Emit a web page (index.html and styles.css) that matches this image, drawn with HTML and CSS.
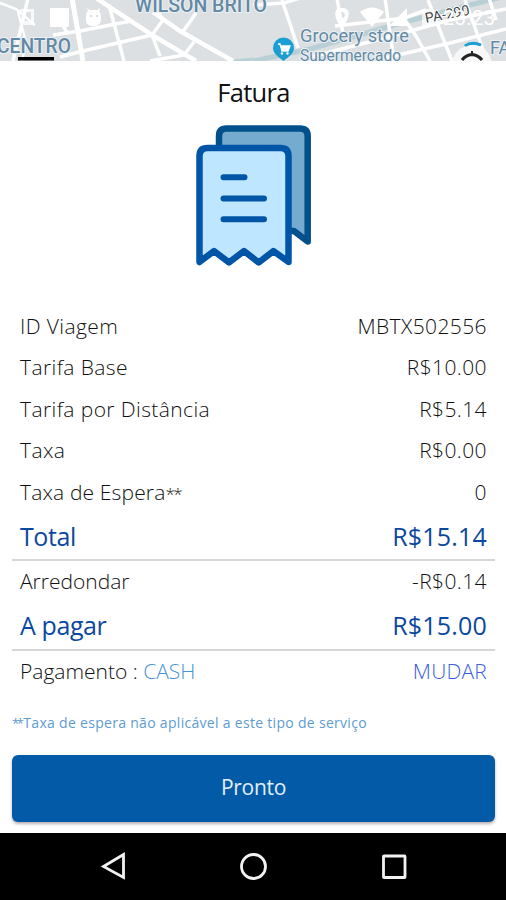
FILE: index.html
```html
<!DOCTYPE html>
<html lang="pt">

<head>
    <meta charset="utf-8">
    <title>Fatura</title>
    <link rel="stylesheet" href="styles.css">
</head>

<body>
    <div class="screen">

        <div class="map">
            <svg xmlns="http://www.w3.org/2000/svg" viewBox="0 0 506 61">
                <rect width="506" height="61" fill="#dce0e2" />

                <!-- main road -->
                <g fill="none" stroke="#b9cfd6" stroke-width="5">
                    <path d="M253 61 L310 49 L405 22 L470 5 L506 -4" />
                    <path d="M234 61 L253 59" stroke-width="3" />
                </g>

                <!-- streets -->
                <g fill="none" stroke="#ffffff" stroke-width="3.5">
                    <path d="M0 3 L16 9 L35 25" stroke-width="2.5" />
                    <path d="M28 -2 L13 61" />
                    <path d="M18 12 L26 42 L22 61" stroke-width="2.5" />
                    <path d="M72 -2 L83 61" stroke-width="5" />
                    <path d="M96 -2 L152 35 L196 61" stroke-width="4.5" />
                    <path d="M109 5 L124 61" />
                    <path d="M53 35 L80 31 L131 21" />
                    <path d="M60 57 L83 51 L152 35" />
                    <path d="M63 26 L68 34" />
                    <path d="M152 35 L163 20 L158 12" />
                    <path d="M152 35 L160 56" />
                    <path d="M153 12 L180 31 L233 61" stroke-width="4.5" />
                    <path d="M196 13 L182 33" />
                    <path d="M194 42 L184 55 L150 61" />
                    <path d="M253 5 L284 3 L300 -2" />
                    <path d="M282 0 L298 48" />
                    <path d="M337 -2 L343 34" />
                    <path d="M385 -2 L394 61" />
                    <path d="M405 20 L416 36 L430 61" />
                    <path d="M428 0 L452 61" />
                    <path d="M465 0 L487 61" />
                    <path d="M489 -2 L496 20" />
                    <path d="M310 57 L385 38 L450 20 L506 9" />
                    <path d="M385 58 L450 43 L506 29" />
                    <path d="M335 26 L405 18 L426 10" />
                </g>

                <!-- status icons -->
                <g fill="#ffffff">
                    <path d="M20 9 H34 V25 H24 V21 H31 V12 H20 Z" opacity="0.8" />
                    <rect x="50" y="8" width="19" height="19" />
                    <path d="M86 17 Q86 12 88 11 L87 8 L90 10 H97 L100 8 L99 11 Q101 13 101 17 V20 Q100 26 93.500 26 Q86 26 86 20 Z" />
                    <path d="M342 8 C332 8 334 18 342 29 C350 18 352 8 342 8 Z M342 12 A3 3 0 1 1 341.900 12 Z" fill-rule="evenodd" />
                    <path d="M360 12 Q372 3 384 12 L372 27 Z" />
                    <path d="M389 26 L407 8 V26 Z" />
                </g>
                <circle cx="91" cy="16" r="1" fill="#cbd3d6" />
                <circle cx="97" cy="16" r="1" fill="#cbd3d6" />
                <rect x="422" y="9" width="11" height="17" fill="#ffffff" opacity="0.65" />

                <!-- labels -->
                <g class="place">
                    <text x="135" y="12" textLength="132" lengthAdjust="spacingAndGlyphs">WILSON BRITO</text>
                    <text x="-3" y="53" textLength="74" lengthAdjust="spacingAndGlyphs">CENTRO</text>
                    <text class="shop" x="300" y="42" textLength="109" lengthAdjust="spacingAndGlyphs">Grocery store</text>
                    <text class="kind" x="300" y="61" textLength="101" lengthAdjust="spacingAndGlyphs">Supermercado</text>
                    <text class="fa" x="490" y="54">FA</text>
                </g>
                <text class="road" x="426" y="23" textLength="45" transform="rotate(-11 426 23)">PA-290</text>
                <text class="clock" x="443" y="25" textLength="52">23:23</text>

                <!-- shop pin -->
                <path d="M273 48 A10.500 10.500 0 0 1 294 48 C294 54 288 57 283.500 61 C279 57 273 54 273 48 Z" fill="#1b9fd3" />
                <path d="M278 44 H280 L282 51 H288 L290 46 H281" fill="#fff" stroke="#fff" stroke-width="1.300" />
                <circle cx="282" cy="53.500" r="1.200" fill="#fff" />
                <circle cx="287.500" cy="53.500" r="1.200" fill="#fff" />

                <!-- compass -->
                <path d="M465 46 Q472 41 481 45" fill="none" stroke="#1b9fd3" stroke-width="3" />
                <circle cx="472" cy="65" r="20" fill="#f7f7f7" />
                <path d="M465 46 Q472 41 481 45" fill="none" stroke="#1b9fd3" stroke-width="2" />
                <path d="M462 60 Q466 55 472 54.500 Q478 55 482 60" fill="none" stroke="#222" stroke-width="3" />
                <path d="M472 51 V55" stroke="#222" stroke-width="2" />

                <rect x="18" y="57" width="36" height="3.500" fill="#000" />
            </svg>
        </div>

        <div class="invoice">
            <h1 class="title">Fatura</h1>

            <svg class="receiptIcon" xmlns="http://www.w3.org/2000/svg" viewBox="190 120 130 150">
                <g stroke-width="6.500" stroke-linejoin="round" stroke-linecap="round">
                    <path d="M219 160 V136 Q219 128.500 226.500 128.500 H300 Q307.700 128.500 307.700 136 V241.500 L294 231 H219 Z" fill="#75abcf" stroke="#00518b" />
                    <path d="M199.500 262 V156 Q199.500 148 207.500 148 H280.500 Q288.500 148 288.500 156 V262 L273.500 251 L258.700 262.500 L244 251 L229 262.500 L214 251 Z" fill="#bfe6ff" stroke="#0055a6" />
                    <path d="M223.500 177.300 H244.500 M223.500 198.500 H264 M223.500 219.300 H264" fill="none" stroke="#0055a6" stroke-width="6" />
                </g>
            </svg>

            <div class="rows">
                <div class="row"><span>ID Viagem</span><span>MBTX502556</span></div>
                <div class="row"><span>Tarifa Base</span><span>R$10.00</span></div>
                <div class="row"><span>Tarifa por Distância</span><span>R$5.14</span></div>
                <div class="row"><span>Taxa</span><span>R$0.00</span></div>
                <div class="row"><span class="wait">Taxa de Espera<span class="stars">**</span></span><span>0</span></div>
                <div class="row total"><span class="name">Total</span><span>R$15.14</span></div>
                <div class="row round"><span class="name">Arredondar</span><span>-R$0.14</span></div>
                <div class="row total"><span class="name">A pagar</span><span>R$15.00</span></div>
                <div class="row payment">
                    <span class="name">Pagamento : <span class="method">CASH</span></span>
                    <span class="change">MUDAR</span>
                </div>
            </div>

            <p class="note"><span class="stars">**</span>Taxa de espera não aplicável a este tipo de serviço</p>

            <button class="done">Pronto</button>
        </div>

        <div class="navbar">
            <svg xmlns="http://www.w3.org/2000/svg" viewBox="0 0 506 67" fill="none" stroke="#f2f2f2" stroke-width="2.800">
                <path d="M123.500 21.500 V44.500 L103.500 33.500 Z" />
                <circle cx="253.500" cy="33.500" r="12" />
                <rect x="383.500" y="23" width="21.500" height="21.500" rx="0.500" />
            </svg>
        </div>

    </div>
</body>

</html>
```

FILE: styles.css
```css
body {
    margin: 0;
    background-color: white;
    font-family: "Open Sans", "Noto Sans", sans-serif;
}

.screen {
    display: flex;
    flex-direction: column;
    width: 506px;
    height: 900px;
    overflow: hidden;
}

.map {
    height: 61px;
}

.map svg,
.navbar svg {
    display: block;
    width: 100%;
    height: 100%;
}

.place {
    font-family: Roboto, sans-serif;
    font-size: 20px;
    font-weight: 500;
    fill: #6389a5;
    stroke: #edf1f3;
    stroke-width: 2px;
    paint-order: stroke;
}

.place .shop {
    font-size: 19px;
    font-weight: 400;
}

.place .kind {
    font-size: 17px;
    font-weight: 400;
}

.place .fa {
    font-size: 18px;
    font-weight: 400;
}

.clock {
    font-family: Roboto, sans-serif;
    font-size: 20px;
    fill: white;
}

.road {
    font-family: Roboto, sans-serif;
    font-size: 14px;
    fill: #3c4245;
    stroke: white;
    stroke-width: 2px;
    paint-order: stroke;
}

.invoice {
    display: flex;
    flex-direction: column;
    height: 772px;
    padding: 0 11px 0 12px;
    box-sizing: border-box;
}

.title {
    margin: 13px 0 0;
    height: 36px;
    line-height: 36px;
    font-size: 25.500px;
    font-weight: 400;
    letter-spacing: -0.700px;
    text-align: center;
    color: #111;
}

.receiptIcon {
    width: 130px;
    height: 150px;
    margin: 10px 0 35px 178px;
    flex-shrink: 0;
}

.row {
    display: flex;
    justify-content: space-between;
    align-items: center;
    height: 41.500px;
    padding: 0 8px;
    font-size: 21px;
    font-weight: 300;
    letter-spacing: 0.400px;
    color: #111;
    white-space: nowrap;
}

.row .wait {
    letter-spacing: 0.150px;
}

.row .stars {
    font-size: 17px;
    letter-spacing: -1.700px;
}

.row.total {
    height: 48.500px;
    font-size: 25px;
    font-weight: 400;
    letter-spacing: 0.200px;
    color: #0b48a0;
    border-bottom: 2px solid #d6d6d6;
    box-sizing: border-box;
}

.row.total .name {
    letter-spacing: -0.400px;
}

.row.round {
    height: 41px;
    padding-bottom: 1px;
    box-sizing: border-box;
}

.row.round .name,
.row.payment .name {
    letter-spacing: 0;
}

.method {
    color: #4a93d2;
}

.change {
    color: #3a5fe0;
    letter-spacing: 0.200px;
}

.note {
    margin: 19px 0 0;
    height: 24px;
    line-height: 24px;
    font-size: 14px;
    letter-spacing: 0.300px;
    color: #5e9bd0;
    white-space: nowrap;
}

.note .stars {
    font-size: 13px;
    letter-spacing: -2.500px;
    margin-right: 2px;
}

.done {
    height: 67px;
    margin-top: auto;
    margin-bottom: 11px;
    padding: 0 0 3px;
    border: none;
    border-radius: 6px;
    background-color: #035ba8;
    box-shadow: 0 2px 3px rgba(60, 30, 40, 0.35);
    font-family: inherit;
    font-size: 21px;
    letter-spacing: -0.300px;
    color: #e2eefb;
}

.navbar {
    height: 67px;
    background-color: black;
}
```
